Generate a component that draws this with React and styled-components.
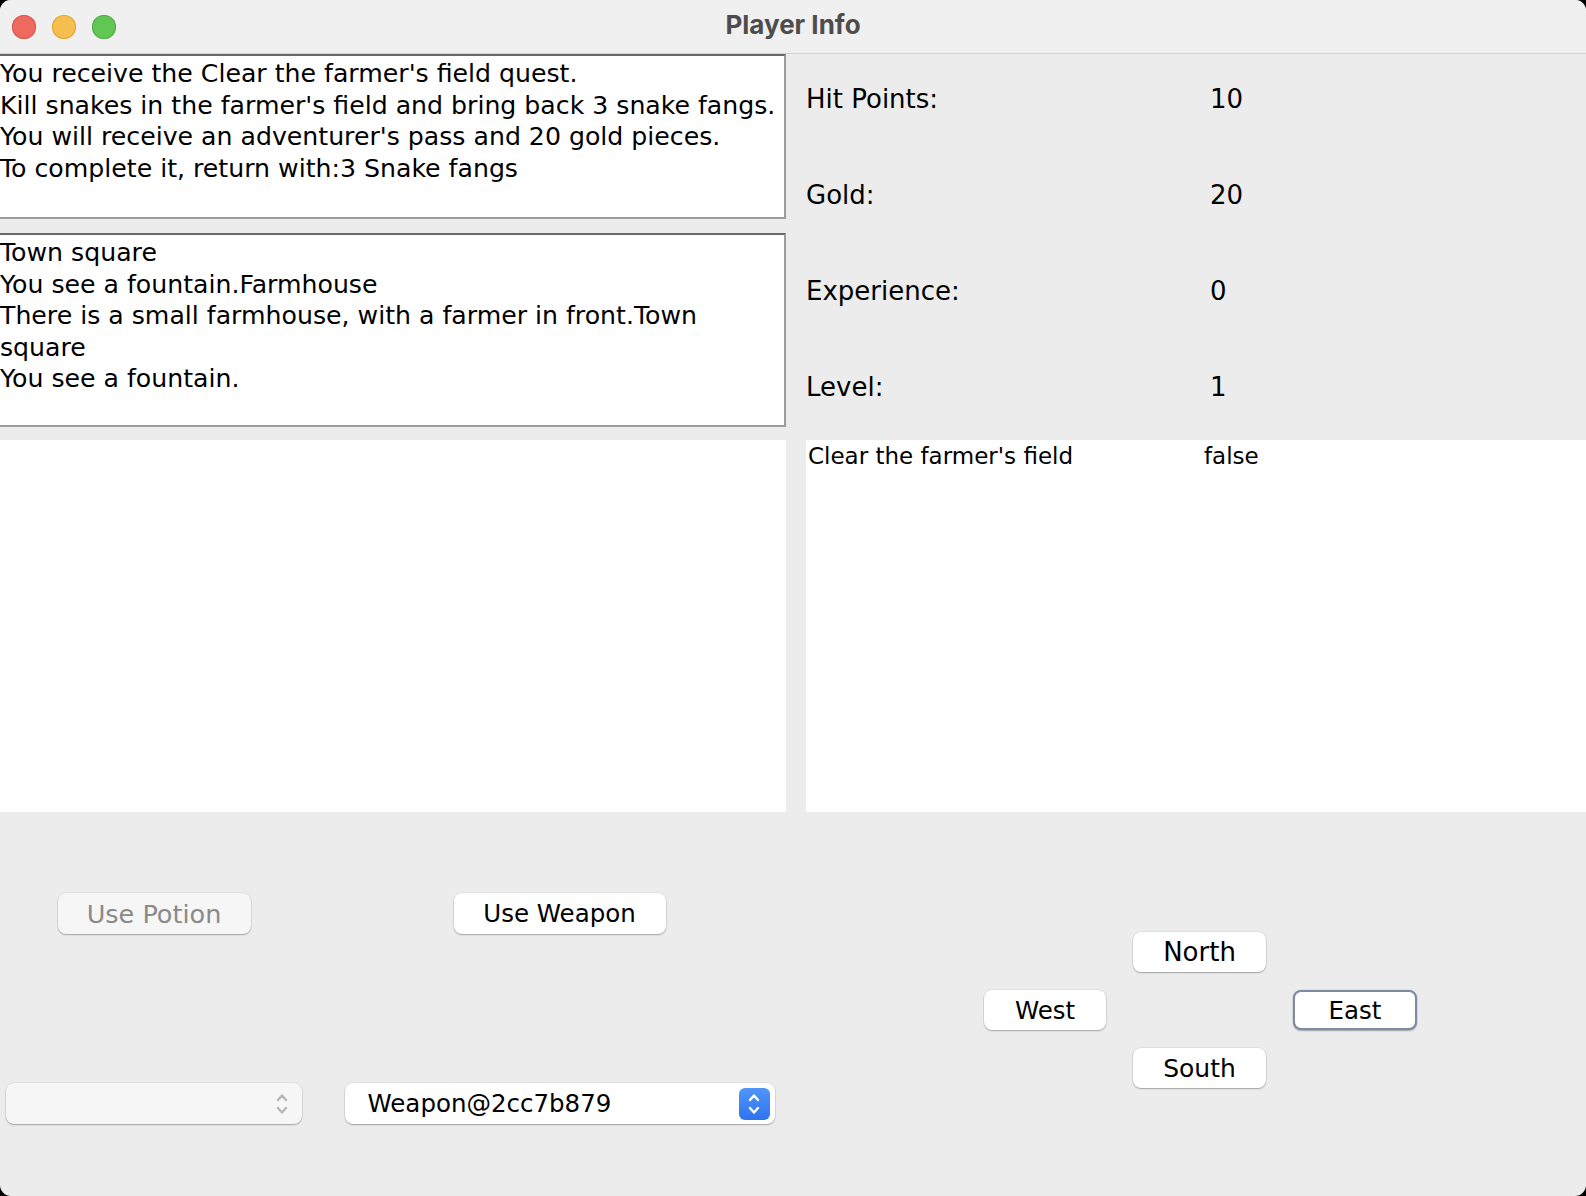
import React from 'react';
import styled, { createGlobalStyle } from 'styled-components';

const GlobalStyle = createGlobalStyle`
  html, body {
    margin: 0;
    padding: 0;
    background: #000;
  }
  * {
    box-sizing: border-box;
  }
`;

const Window = styled.div`
  width: 1586px;
  height: 1196px;
  background: #ececec;
  border-radius: 11px;
  overflow: hidden;
  display: flex;
  flex-direction: column;
  font-family: 'DejaVu Sans', 'Liberation Sans', sans-serif;
  color: #000;
`;

const TitleBar = styled.div`
  height: 54px;
  flex: none;
  background: #f0f0f0;
  border-bottom: 1px solid #d2d2d2;
  display: flex;
  align-items: center;
  position: relative;
  padding-left: 12px;
`;

const Lights = styled.div`
  display: flex;
  gap: 16px;
  margin-top: 1px;
`;

const Light = styled.span`
  width: 24px;
  height: 24px;
  border-radius: 50%;
  background: ${(p) => p.color};
  box-shadow: inset 0 0 0 1px ${(p) => p.ring};
`;

const Title = styled.div`
  position: absolute;
  left: 0;
  right: 0;
  top: 9px;
  text-align: center;
  font-family: Inter, 'Open Sans', sans-serif;
  font-weight: 700;
  font-size: 26px;
  line-height: 32px;
  color: #4d4d4d;
  pointer-events: none;
`;

const Body = styled.div`
  flex: 1;
  display: grid;
  grid-template-columns: 786px 1fr;
  grid-template-rows: 386px 372px 1fr;
  column-gap: 20px;
`;

const LeftTop = styled.div`
  display: flex;
  flex-direction: column;
  gap: 14px;
  padding-bottom: 13px;
`;

const TextArea = styled.div`
  height: ${(p) => p.h}px;
  background: #fff;
  border-top: 2px solid #6a6a6a;
  border-right: 2px solid #9d9d9d;
  border-bottom: 2px solid #9d9d9d;
  padding: 2px 0 0 0;
  font-size: 25.2px;
  line-height: 31.6px;
  white-space: pre;
  overflow: hidden;
`;

const Stats = styled.div`
  display: grid;
  grid-template-rows: repeat(4, 96px);
`;

const StatRow = styled.div`
  display: grid;
  grid-template-columns: 404px 1fr;
  align-items: center;
  padding-bottom: 6px;
  font-size: 26px;
`;

const WhitePanel = styled.div`
  background: #fff;
`;

const QuestRow = styled.div`
  display: grid;
  grid-template-columns: 396px 1fr;
  padding: 2px 0 0 2px;
  font-size: 23px;
  line-height: 28px;
`;

const ActionPanel = styled.div`
  display: grid;
  grid-template-columns: 308px 453px;
  column-gap: 25px;
  grid-template-rows: 41px 41px;
  row-gap: 149px;
  padding-top: 81px;
  justify-items: center;
`;

const Button = styled.button`
  width: ${(p) => p.w}px;
  height: 41px;
  margin: 0;
  padding: 0;
  border: ${(p) => (p.focused ? '2px solid #7d8ba4' : 'none')};
  border-radius: 8px;
  background: ${(p) => (p.disabled ? '#f6f6f6' : '#fff')};
  color: ${(p) => (p.disabled ? '#8a8a8a' : '#000')};
  font-family: 'DejaVu Sans', 'Liberation Sans', sans-serif;
  font-size: ${(p) => p.fs || 24.5}px;
  box-shadow: 0 1px 1.5px rgba(0, 0, 0, 0.28), 0 0 0 0.5px rgba(0, 0, 0, 0.1);
  cursor: default;
`;

const Combo = styled.div`
  width: ${(p) => p.w}px;
  height: 41px;
  border-radius: 8px;
  background: ${(p) => (p.disabled ? '#f6f6f6' : '#fff')};
  box-shadow: 0 1px 1.5px rgba(0, 0, 0, 0.28), 0 0 0 0.5px rgba(0, 0, 0, 0.1);
  display: flex;
  align-items: center;
  justify-content: space-between;
  padding: 0 5px 0 23px;
  font-size: 24.5px;
`;

const Stepper = styled.span`
  width: 31px;
  height: 32px;
  border-radius: 6px;
  display: flex;
  align-items: center;
  justify-content: center;
  background: ${(p) => (p.blue ? 'linear-gradient(#5096f8, #2f73ef)' : 'transparent')};
  color: ${(p) => (p.blue ? '#fff' : '#b8b8b8')};
`;

const CompassPanel = styled.div`
  padding: 120px 0 0 178px;
`;

const Compass = styled.div`
  display: grid;
  grid-template-columns: 122px 133px 124px;
  grid-template-rows: repeat(3, 40px);
  column-gap: 27px;
  row-gap: 18px;
  width: max-content;

  & > div > button {
    height: 40px;
  }
`;

const Cell = styled.div`
  grid-column: ${(p) => p.col};
  grid-row: ${(p) => p.row};
  display: flex;
`;

const Chevrons = () => (
  <svg width="14" height="26" viewBox="0 0 14 26" fill="none" stroke="currentColor" strokeWidth="2.4" strokeLinecap="round" strokeLinejoin="round">
    <path d="M3 9 L7 4.5 L11 9" />
    <path d="M3 17 L7 21.5 L11 17" />
  </svg>
);

const questLines = [
  'You receive the Clear the farmer\'s field quest.',
  'Kill snakes in the farmer\'s field and bring back 3 snake fangs.',
  'You will receive an adventurer\'s pass and 20 gold pieces.',
  'To complete it, return with:3 Snake fangs',
];

const roomLines = [
  'Town square',
  'You see a fountain.Farmhouse',
  'There is a small farmhouse, with a farmer in front.Town',
  'square',
  'You see a fountain.',
];

const stats = [
  ['Hit Points:', '10'],
  ['Gold:', '20'],
  ['Experience:', '0'],
  ['Level:', '1'],
];

export default function App() {
  return (
    <>
      <GlobalStyle />
      <Window>
        <TitleBar>
          <Lights>
            <Light color="#ee6a5f" ring="#d9574d" />
            <Light color="#f5be4f" ring="#dea53b" />
            <Light color="#62c655" ring="#50ad44" />
          </Lights>
          <Title>Player Info</Title>
        </TitleBar>
        <Body>
          <LeftTop>
            <TextArea h={165}>{questLines.join('\n')}</TextArea>
            <TextArea h={194}>{roomLines.join('\n')}</TextArea>
          </LeftTop>
          <Stats>
            {stats.map(([label, value]) => (
              <StatRow key={label}>
                <span>{label}</span>
                <span>{value}</span>
              </StatRow>
            ))}
          </Stats>
          <WhitePanel />
          <WhitePanel>
            <QuestRow>
              <span>Clear the farmer's field</span>
              <span>false</span>
            </QuestRow>
          </WhitePanel>
          <ActionPanel>
            <Button w={193} fs={25.5} disabled>Use Potion</Button>
            <Button w={212}>Use Weapon</Button>
            <Combo w={296} disabled>
              <span />
              <Stepper>
                <Chevrons />
              </Stepper>
            </Combo>
            <Combo w={430}>
              <span>Weapon@2cc7b879</span>
              <Stepper blue>
                <Chevrons />
              </Stepper>
            </Combo>
          </ActionPanel>
          <CompassPanel>
            <Compass>
              <Cell col={2} row={1}>
                <Button w={133} fs={26}>North</Button>
              </Cell>
              <Cell col={1} row={2}>
                <Button w={122}>West</Button>
              </Cell>
              <Cell col={3} row={2}>
                <Button w={124} focused>East</Button>
              </Cell>
              <Cell col={2} row={3}>
                <Button w={133} fs={25}>South</Button>
              </Cell>
            </Compass>
          </CompassPanel>
        </Body>
      </Window>
    </>
  );
}
